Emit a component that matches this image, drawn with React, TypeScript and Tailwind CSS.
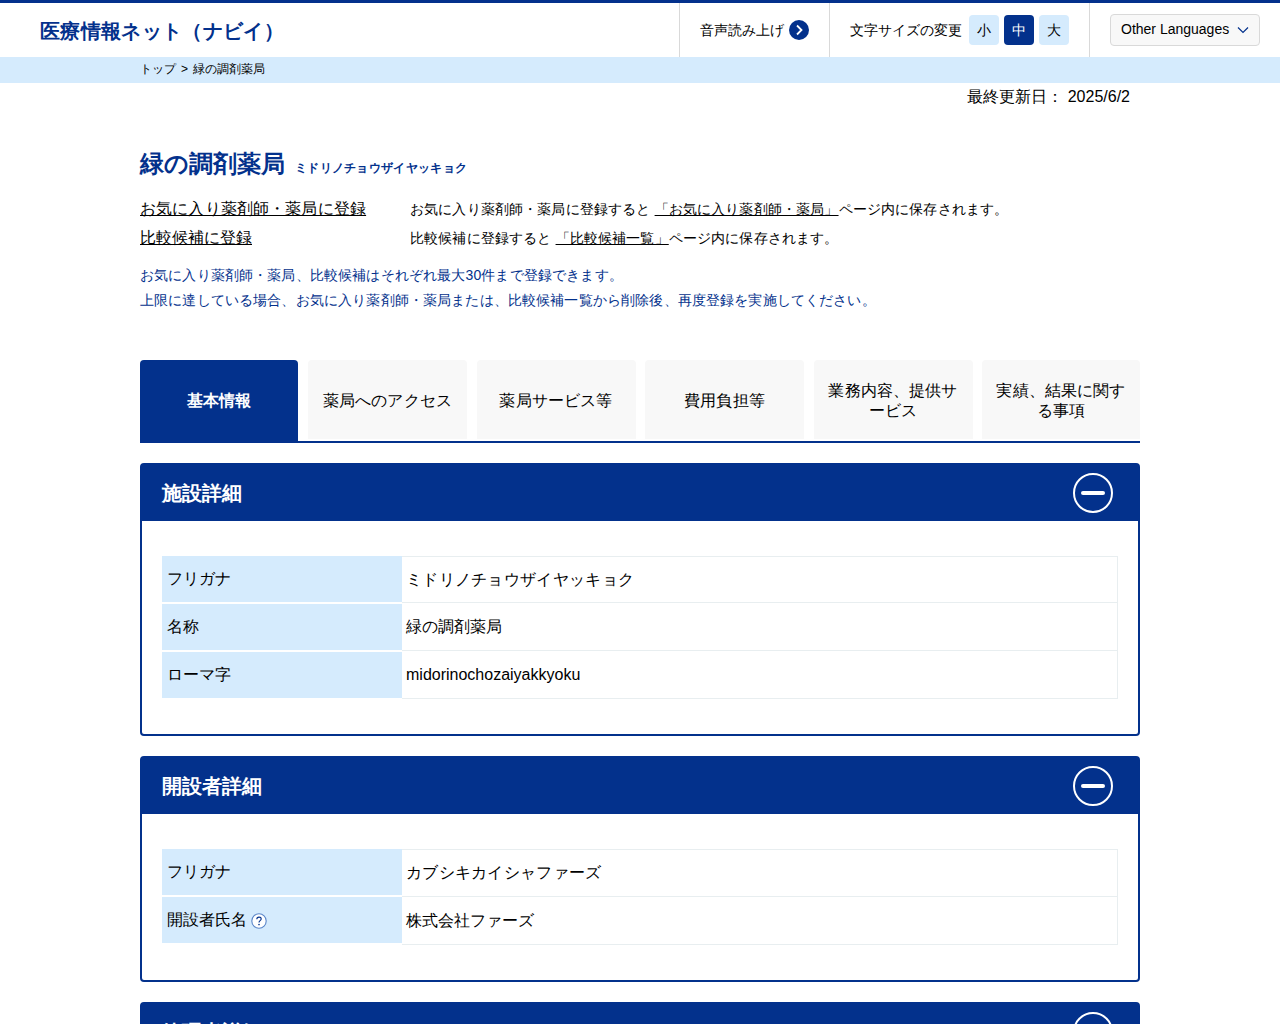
const MinusCircle = () => (
  <svg width="40" height="40" viewBox="0 0 40 40" fill="none">
    <circle cx="20" cy="20" r="19" stroke="white" strokeWidth="2" />
    <rect x="8" y="18" width="24" height="4" rx="2" fill="white" />
  </svg>
)

const HelpIcon = () => (
  <svg className="mt-0.5" width="16" height="16" viewBox="0 0 16 16" fill="none">
    <circle cx="8" cy="8" r="7.2" fill="white" stroke="#5b86c9" strokeWidth="1.1" />
    <path d="M5.8 6.2c0-1.3 1-2.1 2.2-2.1s2.2.8 2.2 1.9c0 1.6-2.2 1.7-2.2 3.4" stroke="#03318c" strokeWidth="1.1" fill="none" />
    <circle cx="8" cy="11.6" r=".8" fill="#03318c" />
  </svg>
)

const tabs = ['薬局へのアクセス', '薬局サービス等', '費用負担等', '業務内容、提供サービス', '実績、結果に関する事項']

interface Row {
  label: string
  value: string
  help?: boolean
  kana?: boolean
}

function Section({ title, rows, tall = false }: { title: string; rows: Row[]; tall?: boolean }) {
  return (
    <section className="mt-5 rounded border-2 border-[#03318c] bg-white">
      <div className="flex h-14 items-center justify-between bg-[#03318c] pl-5 pr-[25px] text-xl font-bold text-white">
        <h2>{title}</h2>
        <MinusCircle />
      </div>
      <div className="px-5 py-[35px]">
        {rows.map((r, i) => (
          <div key={r.label} className={`flex ${i === 0 && !tall ? 'h-[47px]' : 'h-12'}`}>
            <div className={`flex w-60 items-center gap-1 bg-[#d5ebfd] pl-[5px] ${tall ? 'mb-[2px]' : i === 0 ? 'mb-px' : 'my-px'}`}>
              {r.label}
              {r.help && <HelpIcon />}
            </div>
            <div className={`flex flex-1 items-center border border-l-0 border-[#e8eef0] pl-1 ${i === 0 ? '' : 'border-t-0'} ${r.kana ? 'tracking-[0.3px]' : ''}`}>{r.value}</div>
          </div>
        ))}
      </div>
    </section>
  )
}

export default function App() {
  return (
    <div className="h-[1024px] overflow-hidden bg-white text-black" style={{ fontFamily: '"Liberation Sans", sans-serif' }}>
      <header className="flex h-[57px] items-stretch border-t-[3px] border-[#03318c] bg-white">
        <div className="flex flex-1 items-center pl-10 pt-px text-xl font-bold tracking-[0.35px] text-[#03318c]">医療情報ネット（ナビイ）</div>
        <div className="flex w-[150px] items-center gap-[5px] border-l border-[#d9d9d9] pl-5 text-sm">
          音声読み上げ
          <span className="flex h-5 w-5 items-center justify-center rounded-full bg-[#03318c]">
            <svg width="10" height="12" viewBox="0 0 10 12" fill="none"><path d="M3 1.5 7.5 6 3 10.5" stroke="white" strokeWidth="1.8" /></svg>
          </span>
        </div>
        <div className="flex w-[260px] items-center border-l border-[#d9d9d9] pl-5 text-sm">
          <span className="mr-[7px]">文字サイズの変更</span>
          <div className="flex gap-[5px]">
            <span className="flex h-[30px] w-[30px] items-center justify-center rounded-sm bg-[#d5ebfd]">小</span>
            <span className="flex h-[30px] w-[30px] items-center justify-center rounded-sm bg-[#03318c] text-white">中</span>
            <span className="flex h-[30px] w-[30px] items-center justify-center rounded-sm bg-[#d5ebfd]">大</span>
          </div>
        </div>
        <div className="flex w-[191px] items-center border-l border-[#d9d9d9] pl-5">
          <div className="flex h-8 w-[150px] items-center justify-between rounded border border-[#d9d9d9] bg-[#f8f8f8] pl-2.5 pr-2.5 text-sm">
            <span className="mb-0.5">Other Languages</span>
            <svg width="12" height="8" viewBox="0 0 12 8" fill="none"><path d="M1 1.5 6 6.5 11 1.5" stroke="#03318c" strokeWidth="1.2" /></svg>
          </div>
        </div>
      </header>

      <nav className="flex h-[26px] items-center gap-[5px] bg-[#d5ebfd] pb-0.5 pl-[140px] text-xs">
        <span>トップ</span>
        <span>&gt;</span>
        <span>緑の調剤薬局</span>
      </nav>

      <main className="mx-auto w-[1000px]">
        <p className="pr-2.5 text-right leading-7">最終更新日： 2025/6/2</p>

        <div className="mt-[37px] flex items-baseline gap-2.5">
          <h1 className="text-2xl font-bold text-[#03318c]">緑の調剤薬局</h1>
          <span className="text-xs font-bold tracking-[0.3px] text-[#03318c]">ミドリノチョウザイヤッキョク</span>
        </div>

        <div className="mt-[15px] flex h-[29px] items-center pb-0.5">
          <a className="w-[270px] underline tracking-[0.15px]">お気に入り薬剤師・薬局に登録</a>
          <p className="text-sm tracking-[0.15px]">お気に入り薬剤師・薬局に登録すると <span className="underline">「お気に入り薬剤師・薬局」</span>ページ内に保存されます。</p>
        </div>
        <div className="flex h-[29px] items-center pb-0.5">
          <a className="w-[270px] underline">比較候補に登録</a>
          <p className="text-sm tracking-[0.15px]">比較候補に登録すると <span className="underline">「比較候補一覧」</span>ページ内に保存されます。</p>
        </div>

        <div className="mt-2.5 text-sm leading-[25px] tracking-[0.15px] text-[#03318c]">
          <p>お気に入り薬剤師・薬局、比較候補はそれぞれ最大30件まで登録できます。</p>
          <p>上限に達している場合、お気に入り薬剤師・薬局または、比較候補一覧から削除後、再度登録を実施してください。</p>
        </div>

        <div className="mt-[47px] flex h-[83px] gap-[9.5px] border-b-2 border-[#03318c]">
          <div className="-mb-0.5 mr-[0.5px] flex w-[158px] items-center justify-center rounded-t bg-[#03318c] pb-0.5 font-bold text-white">基本情報</div>
          {tabs.map((t) => (
            <div key={t} className="mb-0.5 flex w-[159px] items-center justify-center rounded-t bg-[#f8f8f8] px-3.5 pt-0.5 text-center leading-5 tracking-[0.15px] last:w-[158px]">{t}</div>
          ))}
        </div>

        <Section
          title="施設詳細"
          rows={[
            { label: 'フリガナ', value: 'ミドリノチョウザイヤッキョク', kana: true },
            { label: '名称', value: '緑の調剤薬局' },
            { label: 'ローマ字', value: 'midorinochozaiyakkyoku' },
          ]}
        />
        <Section
          title="開設者詳細"
          tall
          rows={[
            { label: 'フリガナ', value: 'カブシキカイシャファーズ', kana: true },
            { label: '開設者氏名', value: '株式会社ファーズ', help: true },
          ]}
        />
        <Section title="管理者詳細" rows={[]} />
      </main>
    </div>
  )
}
